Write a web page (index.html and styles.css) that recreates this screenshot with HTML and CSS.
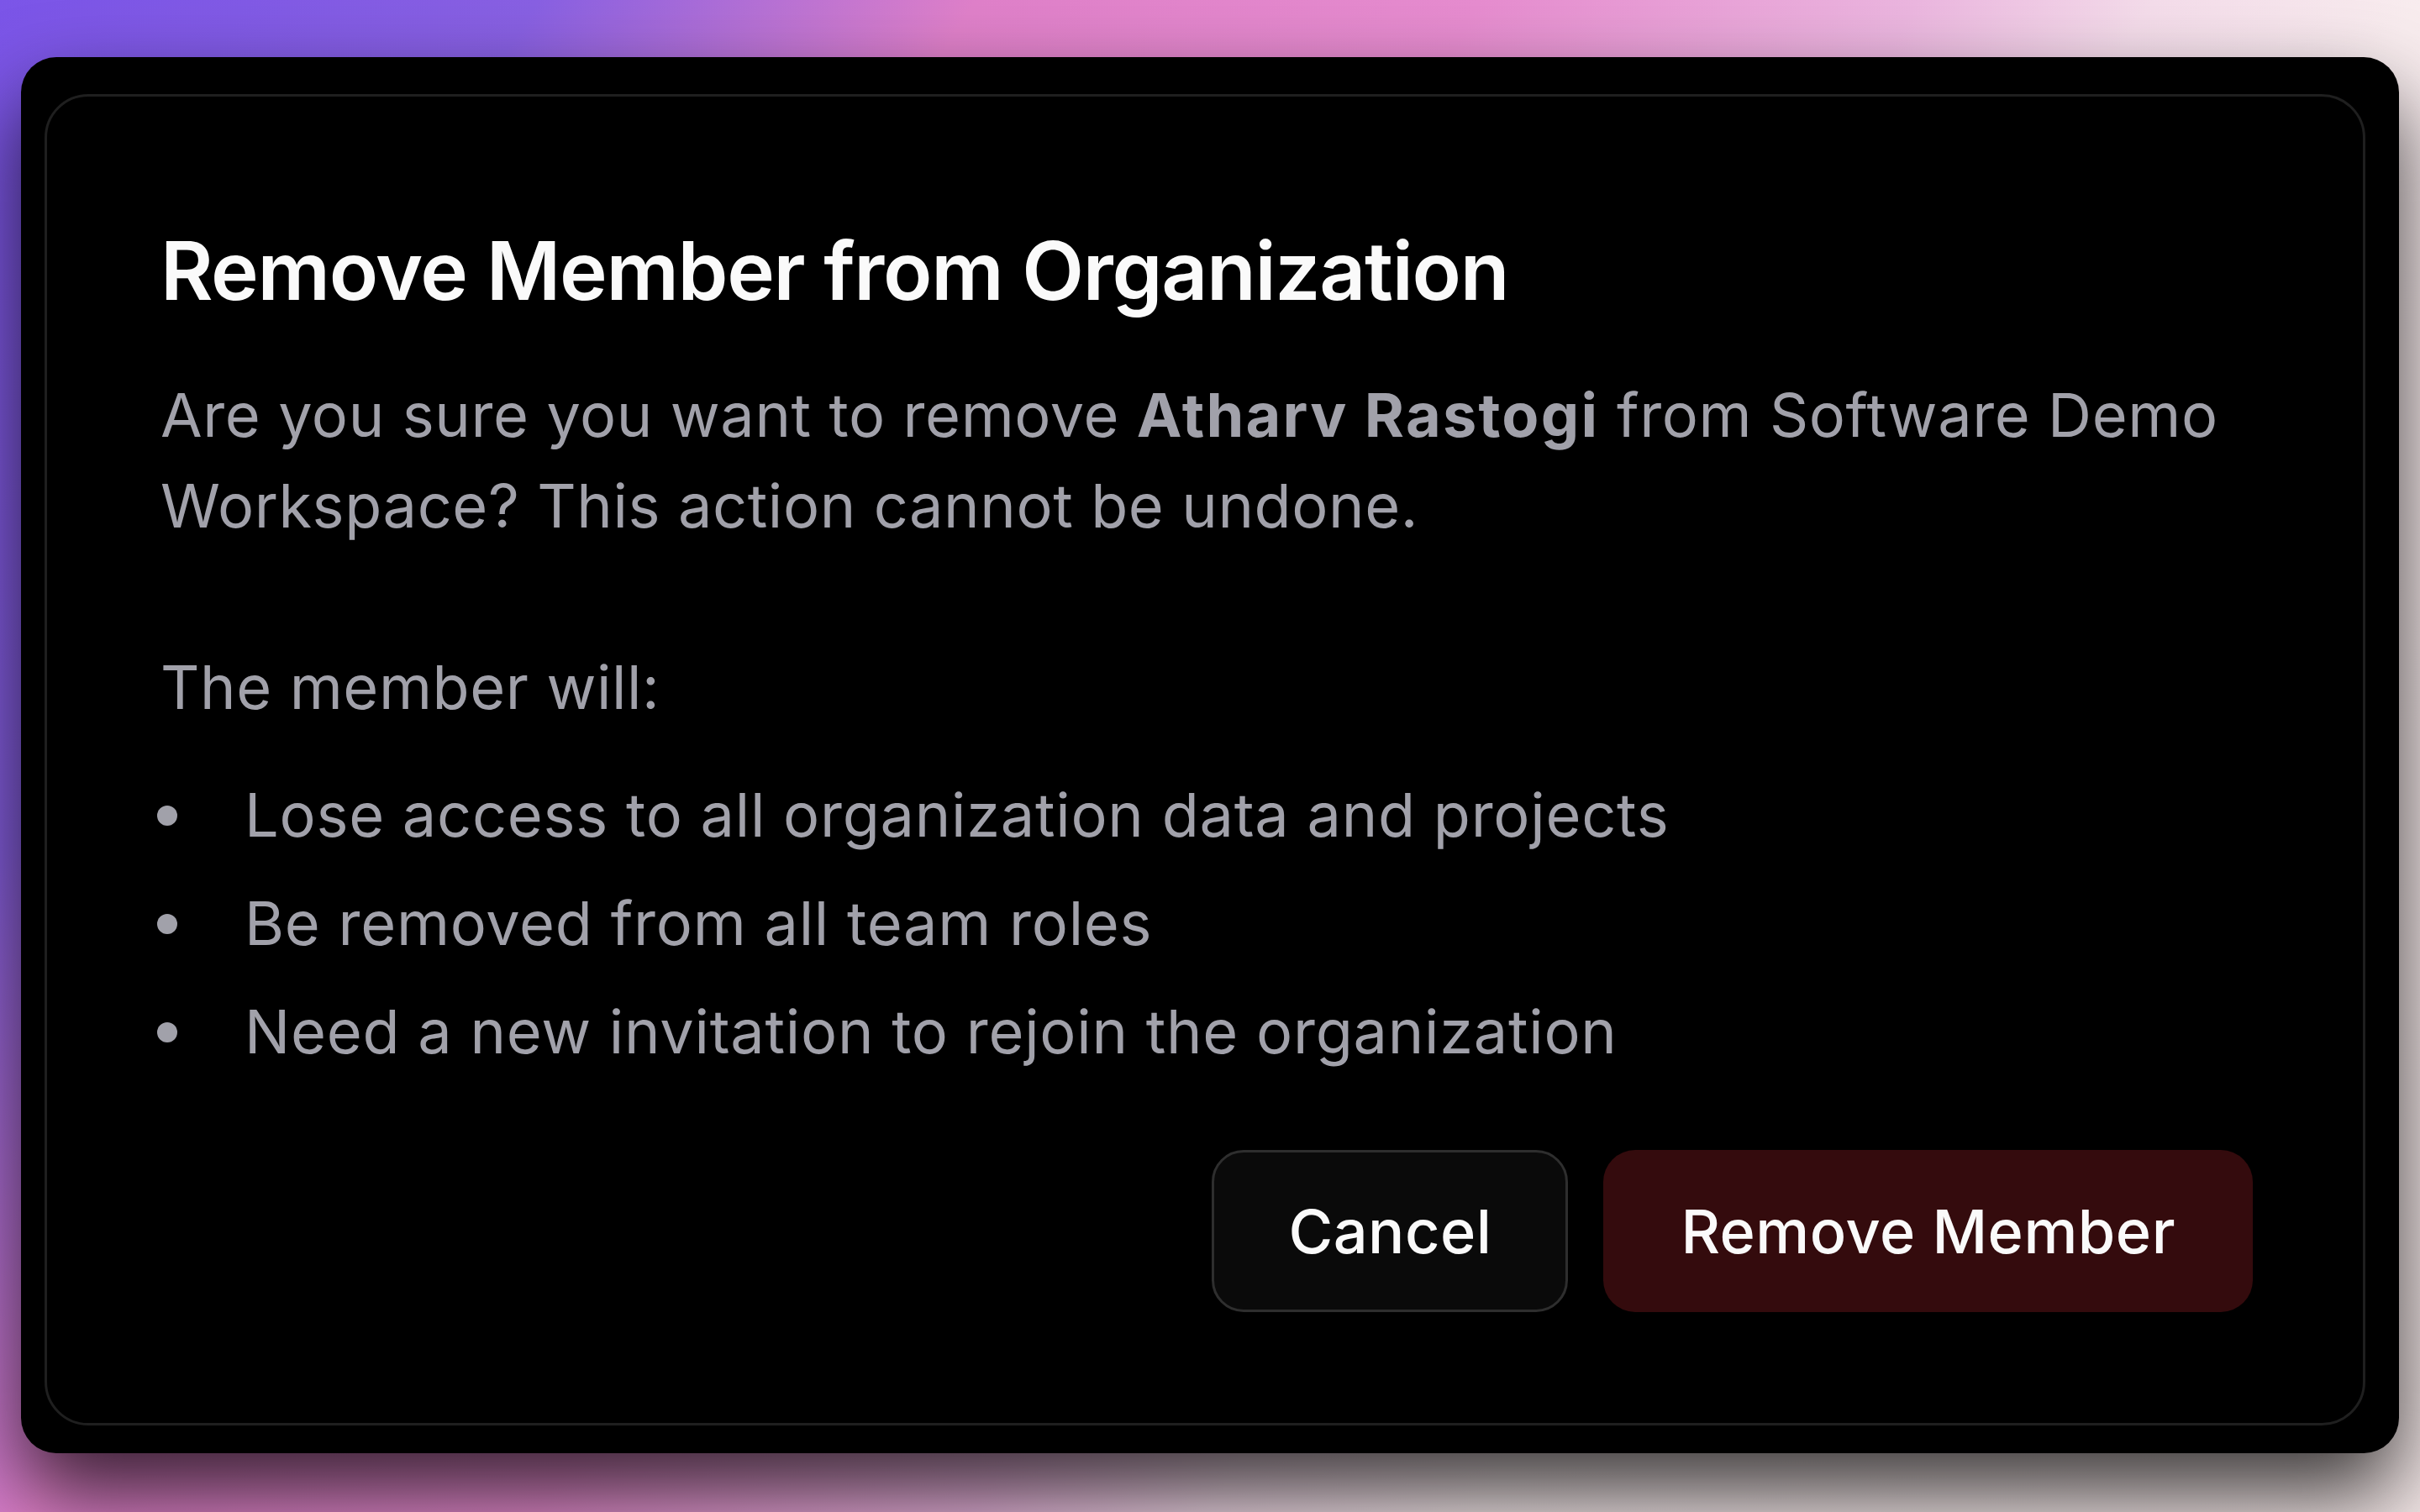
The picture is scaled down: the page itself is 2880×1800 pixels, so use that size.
FILE: index.html
```html
<!DOCTYPE html>
<html lang="en">

<head>
  <meta charset="UTF-8">
  <meta name="viewport" content="width=device-width, initial-scale=1.0">
  <title>Remove Member</title>
  <link rel="stylesheet" href="styles.css">
</head>

<body>
  <div class="window">
    <div class="dialog" role="alertdialog" aria-labelledby="dialogTitle">
      <h2 class="dialogTitle" id="dialogTitle">Remove Member from Organization</h2>
      <p class="dialogText">Are you sure you want to remove <strong>Atharv Rastogi</strong> from Software Demo Workspace? This action cannot be undone.</p>
      <p class="dialogText leadText">The member will:</p>
      <ul class="effects">
        <li>Lose access to all organization data and projects</li>
        <li>Be removed from all team roles</li>
        <li>Need a new invitation to rejoin the organization</li>
      </ul>
      <div class="actions">
        <button class="btn btnCancel">Cancel</button>
        <button class="btn btnDanger">Remove Member</button>
      </div>
    </div>
  </div>
</body>

</html>
```

FILE: styles.css
```css
/* Page backdrop */
body {
  margin: 0;
  height: 1800px;
  padding: 68px 25px 0;
  box-sizing: border-box;
  overflow: hidden;
  font-family: Inter, "Noto Sans", sans-serif;
  background: linear-gradient(122deg, #7b55e8 0%, #8860e2 16%, #df80c9 29%, #e68ccf 44%, #ebb6df 57%, #f4dcea 64%, #f8ecee 72%, #f4e8e8 100%);
}

/* Black frame around the dialog */
.window {
  height: 1662px;
  box-sizing: border-box;
  padding: 44px 40px 33px 28px;
  background: #000;
  border-radius: 42px;
  box-shadow: 0 50px 100px rgba(0, 0, 0, 0.75);
}

.dialog {
  height: 100%;
  box-sizing: border-box;
  display: flex;
  flex-direction: column;
  padding: 143px 131px 131px 135px;
  border: 3px solid #1f1f1f;
  border-radius: 52px;
}

.dialogTitle {
  margin: 0;
  font-size: 96px;
  line-height: 128px;
  font-weight: 600;
  color: #fafafa;
  letter-spacing: -1.3px;
}

.dialogText {
  margin: 54px 0 0;
  font-size: 72px;
  line-height: 108px;
  color: #a1a1aa;
  letter-spacing: 0.6px;
}

.dialogText strong {
  font-weight: 700;
  letter-spacing: 2.2px;
}

.leadText {
  margin-top: 108px;
}

.effects {
  margin: 44px 0 0;
  padding: 0;
  list-style: none;
  display: flex;
  flex-direction: column;
  gap: 21px;
  font-size: 72px;
  line-height: 108px;
  color: #a1a1aa;
  letter-spacing: 0.75px;
}

.effects li {
  display: flex;
}

.effects li::before {
  content: "";
  flex: none;
  width: 24px;
  height: 24px;
  margin: 43px 80px 0 -4px;
  border-radius: 50%;
  background: #a1a1aa;
}

/* Buttons */
.actions {
  margin-top: 87px;
  display: flex;
  justify-content: flex-end;
  gap: 42px;
}

.btn {
  height: 193px;
  box-sizing: border-box;
  padding: 0 92px;
  border-radius: 38px;
  font-family: inherit;
  font-size: 72px;
  line-height: 108px;
  font-weight: 500;
  letter-spacing: 0.5px;
  color: #fafafa;
  cursor: pointer;
}

.btnCancel {
  padding: 0 88px;
  background: #0a0a0a;
  border: 3px solid #2e2e2e;
}

.btnDanger {
  background: #340b0d;
  border: none;
}
```
